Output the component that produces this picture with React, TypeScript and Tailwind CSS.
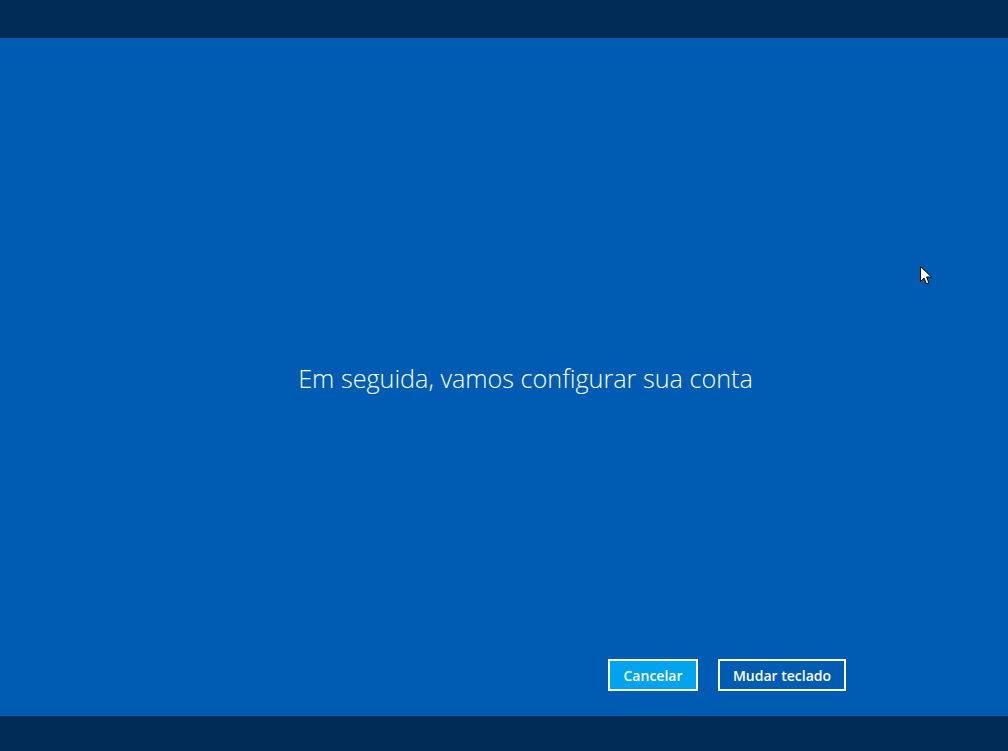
export default function App() {
  return (
    <div className="relative flex h-[751px] w-[1008px] flex-col overflow-hidden bg-[#005cb3] font-['Open_Sans',sans-serif] text-white">
      <div className="h-[38px] shrink-0 bg-[#002c57]" />
      <main className="flex flex-1 flex-col">
        <div className="flex flex-1 items-center justify-center pl-[43px] pt-[60px]">
          <h1 className="text-[25.2px] font-light">
            Em seguida, vamos configurar sua conta
          </h1>
        </div>
        <div className="flex justify-end gap-[20px] pb-[25px] pr-[162px]">
          <button className="h-[32px] w-[90px] border-2 border-white bg-[#00a3ee] text-[14px] font-semibold">
            Cancelar
          </button>
          <button className="h-[32px] w-[128px] border-2 border-white text-[14px] font-semibold">
            Mudar teclado
          </button>
        </div>
      </main>
      <div className="h-[35px] shrink-0 bg-[#002c57]" />
      {/* mouse pointer */}
      <svg className="absolute left-[920px] top-[266px]" width="13" height="20" viewBox="0 0 13 20">
        <path d="M0.5 0.5 L0.5 15.5 L4 12 L6.5 18 L9 17 L6.5 11 L11.5 11 Z" fill="white" stroke="black" strokeWidth="1" />
      </svg>
    </div>
  );
}
